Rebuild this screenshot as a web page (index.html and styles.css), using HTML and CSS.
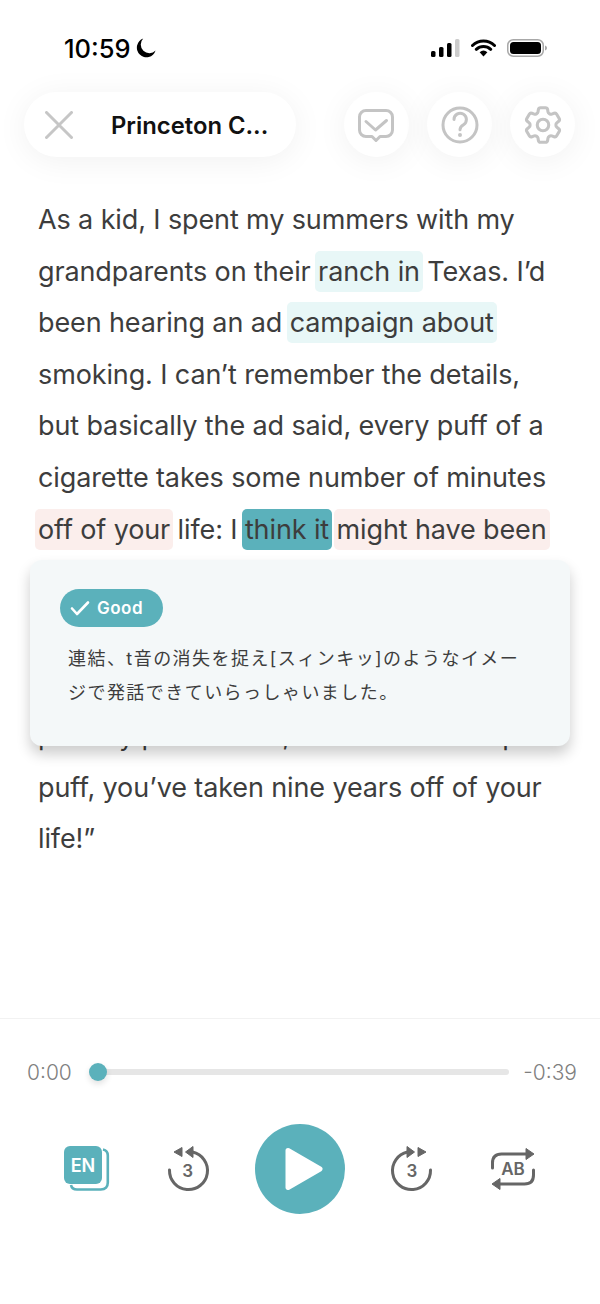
FILE: index.html
```
<!DOCTYPE html>
<html lang="en">
<head>
<meta charset="utf-8">
<title>Reader</title>
<link rel="stylesheet" href="styles.css">
</head>
<body>
<div class="screen">
  <div class="status">
    <div class="status-left">
      <span class="time">10:59</span>
      <svg class="moon" width="20" height="20" viewBox="0 0 20 20"><path d="M7.2.6A9.6 9.6 0 1 0 19.6 12.6 8.4 8.4 0 0 1 7.2.6Z" fill="#000"/></svg>
    </div>
    <div class="status-right">
      <svg width="29" height="18" viewBox="0 0 29 18"><rect x="0" y="12" width="4.500" height="6" rx="1.500" fill="#000"/><rect x="8" y="8" width="4.500" height="10" rx="1.500" fill="#000"/><rect x="16" y="4" width="4.500" height="14" rx="1.500" fill="#000"/><rect x="24" y="0" width="4.500" height="18" rx="1.500" fill="#ccc"/></svg>
      <svg width="25" height="18" viewBox="0 0 25 18"><path d="M1.500 6.500a16 16 0 0 1 22 0M5.300 10.300a10.600 10.600 0 0 1 14.400 0" fill="none" stroke="#000" stroke-width="3" stroke-linecap="round"/><path d="M8.600 13.200a6 6 0 0 1 7.800 0L12.500 17.600Z" fill="#000"/></svg>
      <svg width="40" height="18" viewBox="0 0 40 18"><rect x=".75" y=".75" width="35.500" height="16.500" rx="5.500" fill="none" stroke="#a8a8a8" stroke-width="1.500"/><rect x="3" y="3" width="31" height="12" rx="3.500" fill="#000"/><path d="M38 6.500c1.300.4 2 1.300 2 2.500s-.7 2.100-2 2.500Z" fill="#a8a8a8"/></svg>
    </div>
  </div>

  <header class="topbar">
    <div class="title-pill">
      <svg class="close" width="28" height="28" viewBox="0 0 28 28"><path d="M1.500 1.500 26.500 26.500M26.500 1.500 1.500 26.500" stroke="#c6c6c6" stroke-width="3" stroke-linecap="round"/></svg>
      <span class="title">Princeton C...</span>
    </div>
    <div class="round-btn">
      <svg width="65" height="65" viewBox="0 0 65 65"><path d="M22 18.500h20a6.500 6.500 0 0 1 6.500 6.500v13a6.500 6.500 0 0 1-6.500 6.500h-6l-4 4-4-4h-6a6.500 6.500 0 0 1-6.500-6.500V25a6.500 6.500 0 0 1 6.500-6.500Z" fill="none" stroke="#c4c4c4" stroke-width="3" stroke-linejoin="round"/><path d="M22 29.500l9.500 8.500 11-9.500" fill="none" stroke="#c4c4c4" stroke-width="3" stroke-linecap="round" stroke-linejoin="round"/></svg>
    </div>
    <div class="round-btn">
      <svg width="65" height="65" viewBox="0 0 65 65"><circle cx="33" cy="33" r="17" fill="none" stroke="#c4c4c4" stroke-width="3"/><path d="M27 27.500a6.200 6.200 0 1 1 9.500 5.200c-2.300 1.400-3.500 2.500-3.500 5" fill="none" stroke="#c4c4c4" stroke-width="3" stroke-linecap="round"/><circle cx="33" cy="43" r="2" fill="#c4c4c4"/></svg>
    </div>
    <div class="round-btn">
      <svg width="46" height="46" viewBox="0 0 24 24" fill="none" stroke="#c4c4c4" stroke-width="1.600"><path d="M9.594 3.94c.09-.542.56-.94 1.11-.94h2.593c.55 0 1.02.398 1.11.94l.213 1.281c.063.374.313.686.645.87.074.04.147.083.22.127.325.196.72.257 1.075.124l1.217-.456a1.125 1.125 0 0 1 1.37.49l1.296 2.247a1.125 1.125 0 0 1-.26 1.431l-1.003.827c-.293.241-.438.613-.43.992a7.723 7.723 0 0 1 0 .255c-.008.378.137.75.43.991l1.004.827c.424.35.534.955.26 1.43l-1.298 2.247a1.125 1.125 0 0 1-1.369.491l-1.217-.456c-.355-.133-.75-.072-1.076.124a6.470 6.470 0 0 1-.22.128c-.331.183-.581.495-.644.869l-.213 1.281c-.09.543-.56.94-1.11.94h-2.594c-.55 0-1.019-.398-1.11-.94l-.213-1.281c-.062-.374-.312-.686-.644-.87a6.520 6.520 0 0 1-.22-.127c-.325-.196-.72-.257-1.076-.124l-1.217.456a1.125 1.125 0 0 1-1.369-.49l-1.297-2.247a1.125 1.125 0 0 1 .26-1.431l1.004-.827c.292-.24.437-.613.43-.991a6.932 6.932 0 0 1 0-.255c.007-.38-.138-.751-.43-.992l-1.004-.827a1.125 1.125 0 0 1-.26-1.43l1.297-2.247a1.125 1.125 0 0 1 1.37-.491l1.216.456c.356.133.751.072 1.076-.124.072-.044.146-.086.22-.128.332-.183.582-.495.644-.869l.214-1.28Z"/><circle cx="12" cy="12" r="3"/></svg>
    </div>
  </header>

  <main class="reader">
    <div class="line">As a kid, I spent my summers with my</div>
    <div class="line">grandparents on their <span class="hl hl-teal">ranch in</span> Texas. I’d</div>
    <div class="line">been hearing an ad <span class="hl hl-teal">campaign about</span></div>
    <div class="line">smoking. I can’t remember the details,</div>
    <div class="line">but basically the ad said, every puff of a</div>
    <div class="line">cigarette takes some number of minutes</div>
    <div class="line"><span class="hl hl-pink">off of your</span> life: I <span class="hl hl-active">think it</span> <span class="hl hl-pink">might have been</span></div>
    <div class="covered"></div>
    <div class="line">proudly proclaimed, “At two minutes per</div>
    <div class="line">puff, you’ve taken nine years off of your</div>
    <div class="line">life!”</div>

    <aside class="popup">
      <div class="badge">
        <svg width="20" height="16" viewBox="0 0 20 16"><path d="M2 8.500 7 14 18 2.500" fill="none" stroke="#fff" stroke-width="2.600" stroke-linecap="round" stroke-linejoin="round"/></svg>
        <span>Good</span>
      </div>
      <p class="comment">連結、t音の消失を捉え[スィンキッ]のようなイメージで発話できていらっしゃいました。</p>
    </aside>
  </main>

  <footer class="player">
    <div class="timeline">
      <span class="clock">0:00</span>
      <div class="track"><div class="thumb"></div></div>
      <span class="clock">-0:39</span>
    </div>
    <div class="controls">
      <svg class="ctl ctl-first" width="46" height="46" viewBox="0 0 46 46"><path d="M39 3.500c3 .6 4.800 2.500 4.800 6v27c0 4-2.300 7-7 7H13c-3.500 0-5.500-1.800-6-4.500" fill="none" stroke="#5bb1bb" stroke-width="2.600"/><rect x="0" y="0" width="38" height="38" rx="6" fill="#5bb1bb"/><text x="19" y="25.500" text-anchor="middle" class="icon-text en">EN</text></svg>
      <svg class="ctl" width="44" height="48" viewBox="0 0 44 48"><path d="M2.500 25a19 19 0 1 0 23-18" fill="none" stroke="#666" stroke-width="3" stroke-linecap="round"/><path d="M15 2.500v9l-8-4.500ZM26 1.500v11l-7.500-5.500Z" fill="#666" stroke="#666" stroke-linejoin="round"/><text x="20.700" y="32" text-anchor="middle" class="icon-text num">3</text></svg>
      <button class="play" aria-label="Play"><svg width="40" height="46" viewBox="0 0 40 46"><path d="M4 4.500 36 23 4 41.500Z" fill="#fff" stroke="#fff" stroke-width="5" stroke-linejoin="round"/></svg></button>
      <svg class="ctl" width="44" height="48" viewBox="0 0 44 48"><path d="M41.500 25a19 19 0 1 1-23-18" fill="none" stroke="#666" stroke-width="3" stroke-linecap="round"/><path d="M18 1.500v11l7.500-5.500ZM29 2.500v9l8-4.500Z" fill="#666" stroke="#666" stroke-linejoin="round"/><text x="23" y="32" text-anchor="middle" class="icon-text num">3</text></svg>
      <svg class="ctl ctl-last" width="46" height="46" viewBox="0 0 46 46"><path d="M2.500 22v-5c0-6 3-9 9-9h26M43.500 24v5c0 6-3 9-9 9h-25" fill="none" stroke="#666" stroke-width="3" stroke-linecap="round"/><path d="M36 2.500 44 8l-8 5.500ZM10 32.500 2 38l8 5.500Z" fill="#666" stroke="#666" stroke-linejoin="round"/><text x="23" y="29" text-anchor="middle" class="icon-text ab">AB</text></svg>
    </div>
  </footer>
</div>
</body>
</html>
```

FILE: styles.css
```
* {
  box-sizing: border-box;
}

html,
body {
  margin: 0;
  padding: 0;
  background: #fff;
}

.screen {
  width: 600px;
  height: 1304px;
  display: flex;
  flex-direction: column;
  overflow: hidden;
  font-family: Inter, "Noto Sans CJK JP", sans-serif;
  color: #3d3d3d;
  background: #fff;
}

.status {
  display: flex;
  justify-content: space-between;
  align-items: center;
  height: 28px;
  margin-top: 34px;
  padding: 0 53px 0 64px;
}

.status-left,
.status-right {
  display: flex;
  align-items: center;
}

.status-left {
  gap: 5px;
}

.status-right {
  gap: 11px;
}

.time {
  font-size: 25.5px;
  font-weight: 500;
  color: #000;
}

.topbar {
  display: flex;
  align-items: center;
  gap: 18px;
  height: 65px;
  margin-top: 30px;
  padding: 0 0 0 24px;
}

.title-pill {
  display: flex;
  align-items: center;
  width: 272px;
  height: 65px;
  margin-right: 30px;
  padding-left: 21px;
  border-radius: 33px;
  background: #fff;
  box-shadow: 0 4px 32px rgba(0, 0, 0, 0.06);
}

.title {
  margin: 1px 0 0 38px;
  font-size: 23.8px;
  font-weight: 600;
  color: #111;
  white-space: nowrap;
}

.round-btn {
  display: flex;
  align-items: center;
  justify-content: center;
  width: 65px;
  height: 65px;
  border-radius: 50%;
  background: #fff;
  box-shadow: 0 4px 32px rgba(0, 0, 0, 0.06);
}

.reader {
  position: relative;
  flex: 1;
  margin-top: 37px;
  padding-left: 38px;
}

.line {
  height: 51.6px;
  line-height: 51.6px;
  font-size: 27px;
  font-weight: 370;
  letter-spacing: -0.12px;
  white-space: nowrap;
}

.covered {
  height: 154.8px;
}

.hl {
  margin: 0 -3px;
  padding: 4px 3px;
  border-radius: 5px;
}

.hl-teal {
  background: #e8f7f7;
}

.hl-pink {
  background: #fbeeec;
}

.hl-active {
  background: #5bb1bb;
}

.popup {
  position: absolute;
  left: 30px;
  top: 366px;
  width: 540px;
  height: 186px;
  padding: 29px 30px 0;
  border-radius: 12px;
  background: #f4f8f9;
  box-shadow: 0 8px 14px rgba(0, 0, 0, 0.2);
}

.badge {
  display: inline-flex;
  align-items: center;
  gap: 7px;
  height: 38px;
  padding: 0 20px 0 10px;
  border-radius: 19px;
  background: #5bb1bb;
  color: #fff;
  font-size: 17px;
  font-weight: 600;
  letter-spacing: 0.5px;
}

.comment {
  margin: 14.5px 0 0;
  padding: 0 8px;
  font-size: 18px;
  font-weight: 400;
  line-height: 34.5px;
  letter-spacing: 1.45px;
  color: #3d3d3d;
}

.player {
  height: 286px;
  padding-top: 41px;
  border-top: 1px solid #f2f2f2;
}

.timeline {
  display: flex;
  align-items: center;
  gap: 14px;
  height: 24px;
  padding: 0 23px 0 27px;
}

.clock {
  font-size: 21px;
  font-weight: 300;
  color: #7f7f7f;
}

.track {
  position: relative;
  flex: 1;
  height: 6px;
  margin-left: 12px;
  border-radius: 3px;
  background: #e6e6e6;
}

.thumb {
  position: absolute;
  left: -9px;
  top: -6px;
  width: 18px;
  height: 18px;
  border-radius: 50%;
  background: #5bb1bb;
  box-shadow: 0 3px 6px rgba(0, 0, 0, 0.12);
}

.controls {
  display: flex;
  align-items: center;
  gap: 44px;
  height: 90px;
  margin-top: 40px;
  padding: 0 0 0 64px;
}

.ctl {
  flex: none;
}

.ctl-first {
  margin-right: 13px;
}

.ctl-last {
  margin-left: 13px;
}

.play {
  display: flex;
  align-items: center;
  justify-content: center;
  width: 90px;
  height: 90px;
  padding: 0 0 0 8px;
  border: 0;
  border-radius: 50%;
  background: #5bb1bb;
}

.icon-text {
  font-family: Inter, sans-serif;
  font-weight: 600;
}

.en {
  font-size: 18px;
  fill: #fff;
}

.num {
  font-size: 17px;
  fill: #666;
}

.ab {
  font-size: 17px;
  fill: #666;
}
```
